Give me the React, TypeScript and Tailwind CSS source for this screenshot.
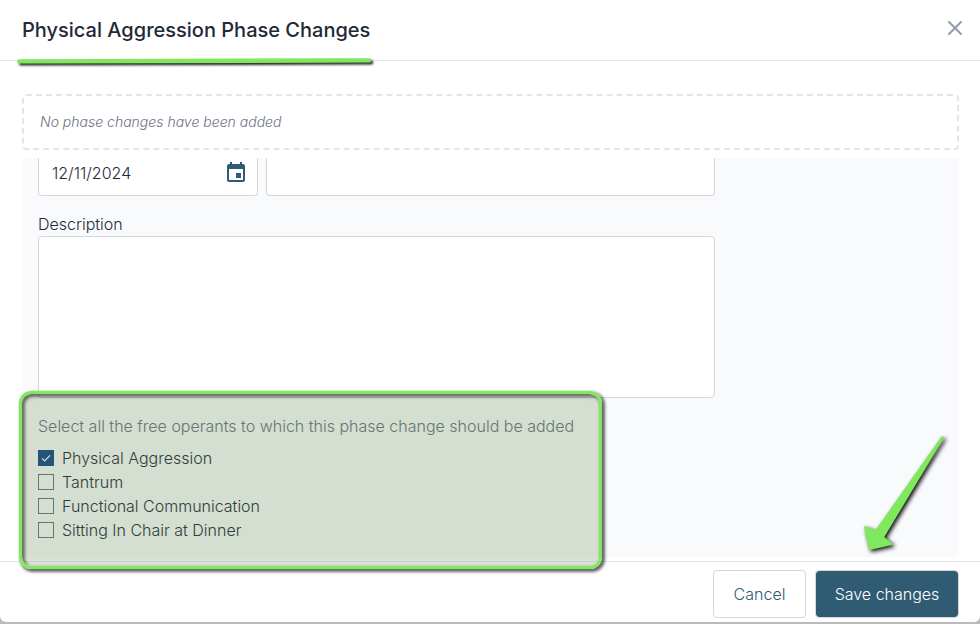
import { useState } from 'react'
import { MdEvent } from 'react-icons/md'

interface Operant {
  id: string
  label: string
}

const OPERANTS: Operant[] = [
  { id: 'physical-aggression', label: 'Physical Aggression' },
  { id: 'tantrum', label: 'Tantrum' },
  { id: 'functional-communication', label: 'Functional Communication' },
  { id: 'sitting-in-chair', label: 'Sitting In Chair at Dinner' },
]

function TitleUnderline() {
  return (
    <svg
      className="pointer-events-none absolute -bottom-2 left-3 z-10 overflow-visible drop-shadow-[2px_2px_1px_rgba(0,0,0,0.85)]"
      width="366"
      height="12"
      aria-hidden="true"
    >
      <path d="M7.2 5.4 L357 4.4" stroke="#80e85c" strokeWidth="4.4" strokeLinecap="round" />
    </svg>
  )
}

function SaveArrow() {
  return (
    <svg
      className="pointer-events-none absolute right-8 bottom-16 z-10 overflow-visible drop-shadow-[2px_2px_2px_rgba(0,0,0,0.95)]"
      width="88"
      height="124"
      viewBox="860 434 88 124"
      aria-hidden="true"
    >
      <path
        d="M941.4 436.6 Q943.4 435.4 944 437.6 L884.3 537 L892.3 543.4 Q893 544.6 891.8 545 L870.5 549.8 Q869 550 868.6 548.6 L864 527 Q864 525.6 865.4 526 L875.3 530.3 Z"
        fill="#80e85c"
      />
    </svg>
  )
}

interface OperantCheckboxProps {
  operant: Operant
  checked: boolean
  onToggle: () => void
}

function OperantCheckbox({ operant, checked, onToggle }: OperantCheckboxProps) {
  return (
    <label htmlFor={operant.id} className="flex w-fit items-center gap-2 leading-6">
      <span className="grid size-4 place-items-center">
        <input
          id={operant.id}
          type="checkbox"
          checked={checked}
          onChange={onToggle}
          className="col-start-1 row-start-1 size-4 appearance-none border border-[#6b7280] bg-transparent checked:border-[#17458a] checked:bg-[#17458a]"
        />
        {checked ? (
          <svg className="pointer-events-none col-start-1 row-start-1" width="16" height="16" aria-hidden="true">
            <path d="M4 8.4 L6.7 11 L12 5.4" fill="none" stroke="#fff" strokeWidth="1.2" />
          </svg>
        ) : null}
      </span>
      <span>{operant.label}</span>
    </label>
  )
}

export default function App() {
  const [date, setDate] = useState('12/11/2024')
  const [selected, setSelected] = useState<string[]>(['physical-aggression'])

  function toggle(id: string) {
    setSelected((prev) => (prev.includes(id) ? prev.filter((s) => s !== id) : [...prev, id]))
  }

  return (
    <div className="flex min-h-screen flex-col bg-[#b9babe] pb-[2px] font-['Inter',sans-serif] text-base font-light text-[#1f2937]">
      <div role="dialog" aria-labelledby="dialog-title" className="flex flex-1 flex-col rounded-b-md bg-white">
        <header className="relative flex h-[61px] items-center justify-between border-b border-[#e5e7eb] pr-[18px] pl-[22px]">
          <h1 id="dialog-title" className="text-xl font-medium">
            Physical Aggression Phase Changes
          </h1>
          <button type="button" aria-label="Close" className="pb-1 text-[#929cac]">
            <svg width="14" height="14" viewBox="0 0 14 14" aria-hidden="true">
              <path d="M1 1 L13 13 M13 1 L1 13" stroke="currentColor" strokeWidth="2" strokeLinecap="round" />
            </svg>
          </button>
          <TitleUnderline />
        </header>

        <main className="flex flex-1 flex-col gap-2 pt-[33px] pr-[21px] pb-1 pl-[22px]">
          <p className="flex h-14 items-center rounded border-2 border-dashed border-[#e5e5e5] px-4 text-sm text-[#6b7280] italic">
            No phase changes have been added
          </p>

          <div className="flex-1 rounded bg-[#f9fafc] px-4 pb-[15px]">
            <div className="flex max-w-[677px] gap-2">
              <div className="flex h-[38px] w-[220px] items-center justify-between rounded-b border border-t-0 border-[#d4d6da] bg-white pr-[9px] pb-2 pl-[13px]">
                <input
                  type="text"
                  aria-label="Date"
                  value={date}
                  onChange={(e) => setDate(e.target.value)}
                  className="h-6 w-40 outline-none"
                />
                <button type="button" aria-label="Choose date" className="text-[#2f5b73]">
                  <MdEvent size={24} />
                </button>
              </div>
              <input
                type="text"
                aria-label="Title"
                className="h-[38px] min-w-0 flex-1 rounded-b border border-t-0 border-[#d4d6da] bg-white px-3 outline-none"
              />
            </div>

            <label htmlFor="description" className="mt-4 block leading-6">
              Description
            </label>
            <textarea
              id="description"
              className="block h-[162px] w-full max-w-[677px] resize-none rounded border border-[#d4d6da] bg-white p-3 outline-none"
            />

            <div className="relative mt-4">
              <fieldset>
                <legend className="mb-2 leading-6 text-[#6b7280]">
                  Select all the free operants to which this phase change should be added
                </legend>
                {OPERANTS.map((operant) => (
                  <OperantCheckbox
                    key={operant.id}
                    operant={operant}
                    checked={selected.includes(operant.id)}
                    onToggle={() => toggle(operant.id)}
                  />
                ))}
              </fieldset>
              {/* Highlight over the operant list */}
              <div
                className="pointer-events-none absolute -top-[23px] -left-[19px] z-10 h-[178px] w-[583px] rounded-xl border-3 border-[#80e85c] bg-[rgba(91,128,70,0.23)] bg-clip-padding shadow-[2px_2px_3px_1px_rgba(0,0,0,0.6),inset_2px_2px_3px_1px_rgba(0,0,0,0.5)]"
                aria-hidden="true"
              />
            </div>
          </div>
        </main>

        <footer className="relative flex justify-end gap-[9px] border-t border-[#e5e7eb] pt-2 pr-[21px] pb-1 pl-[22px]">
          <button type="button" className="h-12 w-[93px] rounded border border-[#d4d6da] bg-white text-[#2f5b73]">
            Cancel
          </button>
          <button type="button" className="h-12 w-36 rounded border border-[#d4d6da] bg-[#2f5b73] bg-clip-padding text-white">
            Save changes
          </button>
          <SaveArrow />
        </footer>
      </div>
    </div>
  )
}
